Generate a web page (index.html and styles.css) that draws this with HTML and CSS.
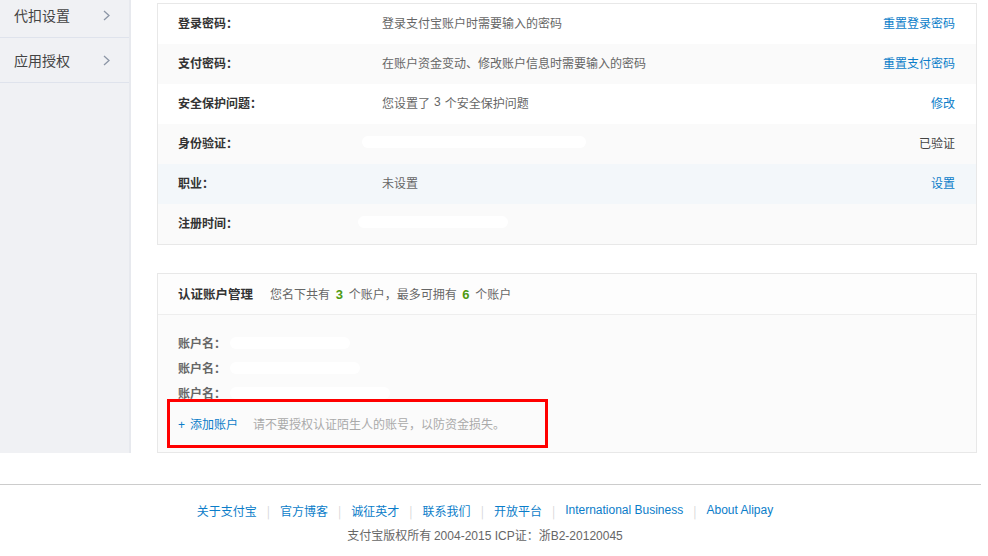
FILE: index.html
```html
<!DOCTYPE html>
<html lang="zh-CN">
<head>
<meta charset="utf-8">
<title>账户设置</title>
<link rel="stylesheet" href="styles.css">
</head>
<body>
<div class="layout">
  <aside class="sidebar">
    <div class="side-item"><span>代扣设置</span><svg class="chev" width="7" height="11" viewBox="0 0 7 11"><polyline points="1,1 6,5.5 1,10" fill="none" stroke="#8c96a6" stroke-width="1.3"/></svg></div>
    <div class="side-item"><span>应用授权</span><svg class="chev" width="7" height="11" viewBox="0 0 7 11"><polyline points="1,1 6,5.5 1,10" fill="none" stroke="#8c96a6" stroke-width="1.3"/></svg></div>
  </aside>
  <main class="main">
    <section class="card info">
      <div class="row r-white">
        <div class="label">登录密码：</div>
        <div class="desc">登录支付宝账户时需要输入的密码</div>
        <a class="act">重置登录密码</a>
      </div>
      <div class="row r-gray">
        <div class="label">支付密码：</div>
        <div class="desc">在账户资金变动、修改账户信息时需要输入的密码</div>
        <a class="act">重置支付密码</a>
      </div>
      <div class="row r-white">
        <div class="label">安全保护问题：</div>
        <div class="desc">您设置了 <span class="num">3</span> 个安全保护问题</div>
        <a class="act">修改</a>
      </div>
      <div class="row r-gray">
        <div class="label">身份验证：</div>
        <div class="desc"><span class="blur b1"></span></div>
        <span class="plain">已验证</span>
      </div>
      <div class="row r-blue">
        <div class="label">职业：</div>
        <div class="desc">未设置</div>
        <a class="act">设置</a>
      </div>
      <div class="row r-gray">
        <div class="label">注册时间：</div>
        <div class="desc"><span class="blur b2"></span></div>
      </div>
    </section>

    <section class="card accounts">
      <div class="acc-head">
        <span class="acc-title">认证账户管理</span>
        <span class="acc-sub">您名下共有 <b class="green">3</b> 个账户，最多可拥有 <b class="green">6</b> 个账户</span>
      </div>
      <div class="acc-body">
        <div class="acc-line"><span class="acc-label">账户名：</span><span class="blur b3"></span></div>
        <div class="acc-line"><span class="acc-label">账户名：</span><span class="blur b4"></span></div>
        <div class="acc-line"><span class="acc-label">账户名：</span><span class="blur b5"></span></div>
        <div class="acc-add"><a class="add-link"><span class="plus">+</span>添加账户</a><span class="tip">请不要授权认证陌生人的账号，以防资金损失。</span></div>
        <div class="highlight"></div>
      </div>
    </section>
  </main>
</div>

<footer class="footer">
  <nav class="links">
    <a>关于支付宝</a><span class="sep">|</span>
    <a>官方博客</a><span class="sep">|</span>
    <a>诚征英才</a><span class="sep">|</span>
    <a>联系我们</a><span class="sep">|</span>
    <a>开放平台</a><span class="sep">|</span>
    <a class="en">International Business</a><span class="sep">|</span>
    <a class="en">About Alipay</a>
  </nav>
  <div class="copy">支付宝版权所有 <span class="en">2004-2015 ICP</span>证：浙<span class="en">B2-20120045</span></div>
</footer>
</body>
</html>
```

FILE: styles.css
```css
* { box-sizing: border-box; }
html, body { margin: 0; padding: 0; background: #fff; }
body {
  width: 988px;
  height: 556px;
  overflow: hidden;
  font-family: "Noto Sans CJK SC", "Liberation Sans", sans-serif;
  font-size: 12px;
  color: #333;
}
a { text-decoration: none; cursor: pointer; }

.layout {
  display: flex;
  align-items: flex-start;
}

.sidebar {
  width: 131px;
  height: 460px;
  margin-top: -7px;
  background: #f0f1f4;
  border-right: 2px solid #e7e9ee;
}
.side-item {
  height: 45px;
  display: flex;
  align-items: center;
  justify-content: space-between;
  padding: 0 19px 0 14px;
  border-bottom: 1px solid #dfe3ec;
  font-size: 14px;
  color: #444;
}
.chev { display: block; margin-top: 1px; }

.main {
  width: 820px;
  margin-left: 26px;
  padding-top: 3px;
}

.card {
  border: 1px solid #e8e8e8;
  background: #fff;
}

.row {
  height: 40px;
  display: flex;
  align-items: center;
  padding: 0 21px 4px 20px;
}
.r-white { background: #fff; }
.r-gray { background: #fafafa; }
.r-blue { background: #f3f7fa; }

.label {
  width: 204px;
  font-weight: bold;
  color: #333;
}
.desc {
  flex: 1;
  color: #666;
  display: flex;
  align-items: center;
}
.num { font-family: "Liberation Sans", sans-serif; margin: 0 4px; }
.act { color: #0b7dc9; }
.plain { color: #444; }

.blur {
  display: inline-block;
  height: 12px;
  background: #fff;
  border-radius: 6px;
}
.b1 { width: 224px; margin-left: -20px; }
.b2 { width: 150px; margin-left: -24px; }
.b3 { width: 120px; margin-left: 4px; }
.b4 { width: 130px; margin-left: 4px; }
.b5 { width: 160px; margin-left: 4px; }

.accounts {
  margin-top: 28px;
  background: #fbfbfb;
}
.acc-head {
  height: 41px;
  display: flex;
  align-items: center;
  padding: 0 20px 2px;
  background: #fdfdfd;
  border-bottom: 1px solid #eeeeee;
}
.acc-title {
  font-weight: bold;
  color: #333;
  margin-right: 17px;
  font-size: 12.5px;
}
.acc-sub { color: #666; }
.green {
  color: #4f9a12;
  font-family: "Liberation Sans", sans-serif;
  font-size: 13px;
  margin: 0 3px;
}

.acc-body {
  position: relative;
  padding: 15px 20px 16px;
}
.acc-line {
  height: 25px;
  display: flex;
  align-items: center;
}
.acc-label { font-weight: bold; color: #666; }
.acc-add {
  height: 25px;
  margin-top: 6px;
  display: flex;
  align-items: center;
}
.add-link { color: #0b7dc9; margin-right: 15px; }
.plus { margin-right: 5px; font-family: "Liberation Sans", sans-serif; }
.tip { color: #aaa; }

.highlight {
  position: absolute;
  left: 9px;
  top: 84px;
  width: 381px;
  height: 49px;
  border: 3px solid #ff0000;
}

.footer {
  width: 981px;
  margin-top: 31px;
  border-top: 1px solid #cccccc;
  text-align: center;
  padding-right: 11px;
}
.links {
  padding-top: 13px;
  height: 37px;
  display: flex;
  justify-content: center;
  align-items: center;
}
.links a { color: #0b7dc9; }
.links .en { font-family: "Liberation Sans", sans-serif; }
.sep { color: #d6d6d6; margin: 0 10px; }
.copy {
  margin-top: 4px;
  color: #666;
}
.copy .en { font-family: "Liberation Sans", sans-serif; }
```
